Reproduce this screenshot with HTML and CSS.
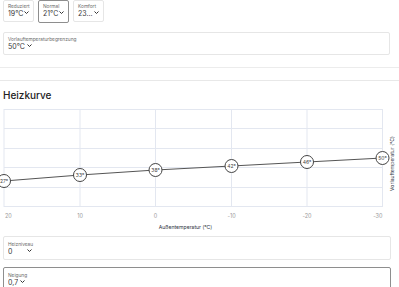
FILE: index.html
```html
<!DOCTYPE html>
<html lang="de">
<head>
<meta charset="utf-8">
<link rel="stylesheet" href="styles.css">
</head>
<body>
<div class="panel">
  <div class="modes">
    <div class="field mode">
      <div class="field-label">Reduziert</div>
      <div class="field-value"><span class="value-text">19°C</span><svg class="chev" viewBox="0 0 5 3"><polyline points="0.5,0.5 2.5,2.5 4.5,0.5"/></svg></div>
    </div>
    <div class="field mode field--active">
      <div class="field-label">Normal</div>
      <div class="field-value"><span class="value-text">21°C</span><svg class="chev" viewBox="0 0 5 3"><polyline points="0.5,0.5 2.5,2.5 4.5,0.5"/></svg></div>
    </div>
    <div class="field mode">
      <div class="field-label">Komfort</div>
      <div class="field-value"><span class="value-text">23...</span><svg class="chev" viewBox="0 0 5 3"><polyline points="0.5,0.5 2.5,2.5 4.5,0.5"/></svg></div>
    </div>
  </div>
  <div class="field wide wide--first">
    <div class="field-label">Vorlauftemperaturbegrenzung</div>
    <div class="field-value inline"><span class="value-text">50°C</span><svg class="chev" viewBox="0 0 5 3"><polyline points="0.5,0.5 2.5,2.5 4.5,0.5"/></svg></div>
  </div>
</div>
<div class="divider"></div>
<h2 class="title">Heizkurve</h2>
<svg class="chart" width="399" height="132" viewBox="0 0 399 132">
  <g class="grid">
    <line x1="4" y1="8" x2="4" y2="106"/>
    <line x1="80" y1="8" x2="80" y2="106"/>
    <line x1="155.5" y1="8" x2="155.5" y2="106"/>
    <line x1="231.5" y1="8" x2="231.5" y2="106"/>
    <line x1="307" y1="8" x2="307" y2="106"/>
    <line x1="382.5" y1="8" x2="382.5" y2="106"/>
    <line x1="4" y1="8.5" x2="382.5" y2="8.5"/>
    <line x1="4" y1="27.5" x2="382.5" y2="27.5"/>
    <line x1="4" y1="47.5" x2="382.5" y2="47.5"/>
    <line x1="4" y1="66.5" x2="382.5" y2="66.5"/>
    <line x1="4" y1="86.5" x2="382.5" y2="86.5"/>
    <line x1="4" y1="105.5" x2="382.5" y2="105.5"/>
  </g>
  <polyline class="curve" points="4,80 80,74 155.5,69 231.5,65 307,61 382.5,57"/>
  <g class="pt"><circle cx="4" cy="80" r="6.5"/><text x="4" y="81.8">27°</text></g>
  <g class="pt"><circle cx="80" cy="74" r="6.5"/><text x="80" y="75.8">33°</text></g>
  <g class="pt"><circle cx="155.5" cy="69" r="6.5"/><text x="155.5" y="70.8">38°</text></g>
  <g class="pt"><circle cx="231.5" cy="65" r="6.5"/><text x="231.5" y="66.8">42°</text></g>
  <g class="pt"><circle cx="307" cy="61" r="6.5"/><text x="307" y="62.8">46°</text></g>
  <g class="pt"><circle cx="382.5" cy="57" r="6.5"/><text x="382.5" y="58.8">50°</text></g>
  <g class="ticks">
    <text x="5" y="117" class="start">20</text>
    <text x="80" y="117">10</text>
    <text x="155.5" y="117">0</text>
    <text x="231.5" y="117">-10</text>
    <text x="307" y="117">-20</text>
    <text x="382.5" y="117" class="end">-30</text>
  </g>
  <text class="axis-title" x="185.5" y="127.8">Außentemperatur (°C)</text>
  <text class="axis-title" transform="translate(393.8 62.5) rotate(-90)">Vorlauftemperatur (°C)</text>
</svg>
<div class="fields">
  <div class="field wide">
    <div class="field-label">Heizniveau</div>
    <div class="field-value inline"><span class="value-text value-text--min">0</span><svg class="chev" viewBox="0 0 5 3"><polyline points="0.5,0.5 2.5,2.5 4.5,0.5"/></svg></div>
  </div>
  <div class="field wide field--active">
    <div class="field-label">Neigung</div>
    <div class="field-value inline"><span class="value-text">0,7</span><svg class="chev" viewBox="0 0 5 3"><polyline points="0.5,0.5 2.5,2.5 4.5,0.5"/></svg></div>
  </div>
</div>
</body>
</html>
```

FILE: styles.css
```css
html, body {
  margin: 0;
  padding: 0;
  background: #fff;
  font-family: Inter, "Noto Sans", sans-serif;
  color: #222;
}

.panel {
  padding: 0 9px 12px 3px;
  border-bottom: 1px solid #ececec;
}

.modes {
  display: flex;
  gap: 4px;
}

.field {
  border: 1px solid #e6e6e6;
  border-radius: 2px;
  padding: 2px 4px 2px 4px;
  box-sizing: border-box;
}

.field--active {
  border-color: #8e8e8e;
}

.mode {
  width: 31px;
  height: 22px;
}

.mode.field--active {
  height: 23px;
}

.field-label {
  font-size: 4.8px;
  line-height: 6px;
  color: #6b6b6b;
  white-space: nowrap;
}

.field-value {
  display: flex;
  align-items: flex-start;
  font-size: 7px;
  line-height: 10px;
  color: #3a3a3a;
  white-space: nowrap;
}

.field-value .value-text {
  flex: 1;
  overflow: hidden;
}

.field-value.inline {
  gap: 2px;
}

.field-value.inline .value-text {
  flex: none;
}

.value-text--min {
  min-width: 17px;
}

.chev {
  width: 5px;
  height: 3px;
  margin-top: 2px;
  flex: none;
}

.chev polyline {
  fill: none;
  stroke: #333;
  stroke-width: 1;
}

.wide {
  height: 23px;
  padding-top: 3px;
}

.wide--first {
  margin-top: 9px;
}

.divider {
  margin-top: 12px;
  border-top: 1px solid #e8e8e8;
}

.title {
  margin: 8px 3px 0;
  font-size: 10px;
  line-height: 12px;
  font-weight: 500;
  color: #222;
}

.chart {
  display: block;
}

.grid line {
  stroke: #e3e7f0;
  stroke-width: 1;
}

.curve {
  fill: none;
  stroke: #555;
  stroke-width: 1;
}

.pt circle {
  fill: #fff;
  stroke: #444;
  stroke-width: 1;
}

.pt text {
  font-size: 5px;
  fill: #444;
  text-anchor: middle;
  font-family: Inter, sans-serif;
}

.ticks text {
  font-size: 5.5px;
  fill: #9a9a9a;
  text-anchor: middle;
  font-family: Inter, sans-serif;
}

.ticks text.start {
  text-anchor: start;
}

.ticks text.end {
  text-anchor: end;
}

.axis-title {
  font-size: 5.1px;
  fill: #2f3542;
  text-anchor: middle;
  font-family: Inter, sans-serif;
}

.fields {
  margin-top: 3px;
  padding: 0 8px 0 3px;
  display: flex;
  flex-direction: column;
  gap: 7px;
}

.fields .wide {
  height: 24px;
  padding-top: 4px;
}
```
